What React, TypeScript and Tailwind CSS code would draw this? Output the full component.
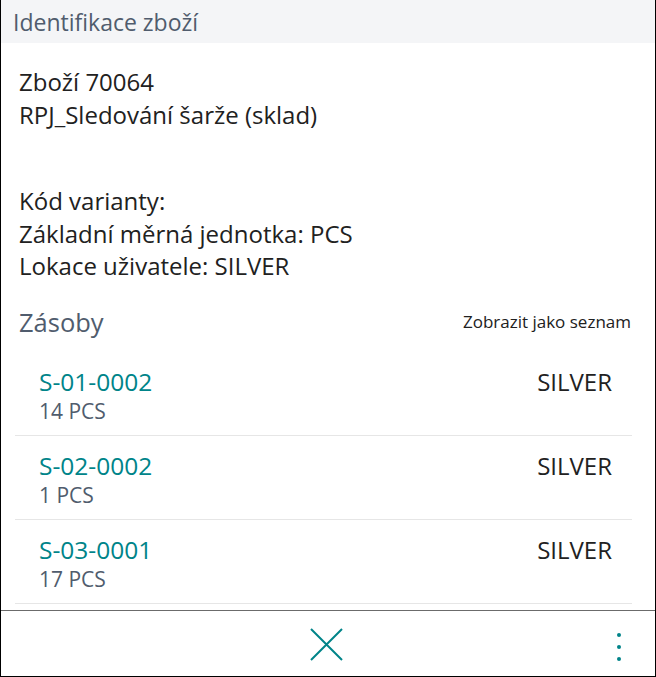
import React from "react";

const rows = [
  { bin: "S-01-0002", qty: "14 PCS", loc: "SILVER" },
  { bin: "S-02-0002", qty: "1 PCS", loc: "SILVER" },
  { bin: "S-03-0001", qty: "17 PCS", loc: "SILVER" },
];

export default function App() {
  return (
    <div
      className="h-[677px] w-[656px] flex flex-col bg-white border-l border-r border-b border-black text-[#212121] overflow-hidden"
      style={{ fontFamily: '"Open Sans", "Noto Sans", sans-serif' }}
    >
      <div className="flex-1 flex flex-col min-h-0">
        <div className="h-[43px] shrink-0 bg-[#f4f5f7] pl-[12px] pt-[9px] text-[23px] leading-[26px] text-[#505c6d]">
          Identifikace zboží
        </div>
        <div className="pt-[22px] px-[18px] text-[24px] leading-[33px]">
          <div>Zboží 70064</div>
          <div>RPJ_Sledování šarže (sklad)</div>
        </div>
        <div className="mt-[54px] px-[18px] text-[24px] leading-[32.5px]">
          <div>Kód varianty:</div>
          <div>Základní měrná jednotka: PCS</div>
          <div>Lokace uživatele: SILVER</div>
        </div>
        <div className="mt-[22px] h-[34px] flex items-center justify-between pl-[18px] pr-[24px]">
          <div className="text-[25.5px] leading-[34px] text-[#505c6d]">Zásoby</div>
          <div className="text-[17px] leading-[22px] text-[#212121]">Zobrazit jako seznam</div>
        </div>
        <div className="mt-[13px] ml-[14px] mr-[23px] flex flex-col">
          {rows.map((r) => (
            <div
              key={r.bin}
              className="pt-[16px] pb-[9px] pl-[24px] pr-[20px] border-b border-[#e6e6e6]"
            >
              <div className="flex items-baseline justify-between">
                <div className="text-[24.5px] leading-[28px] text-[#008489]">{r.bin}</div>
                <div className="text-[24px] leading-[28px] text-[#212121]">{r.loc}</div>
              </div>
              <div className="text-[21px] leading-[30px] text-[#505c6d]">{r.qty}</div>
            </div>
          ))}
        </div>
      </div>
      <div className="h-[66px] shrink-0 border-t border-[#6b6b6b] flex items-center pl-[44px]">
        <div className="flex-1 flex justify-center items-center pt-[2px]">
          <svg width="33" height="33" viewBox="0 0 33 33" fill="none">
            <path d="M1 1L32 32M32 1L1 32" stroke="#008489" strokeWidth="2" />
          </svg>
        </div>
        <div className="w-[48px] pl-[10px] pt-[6px] flex flex-col gap-[8px]">
          <span className="block w-[4px] h-[4px] rounded-full bg-[#008489]" />
          <span className="block w-[4px] h-[4px] rounded-full bg-[#008489]" />
          <span className="block w-[4px] h-[4px] rounded-full bg-[#008489]" />
        </div>
      </div>
    </div>
  );
}
